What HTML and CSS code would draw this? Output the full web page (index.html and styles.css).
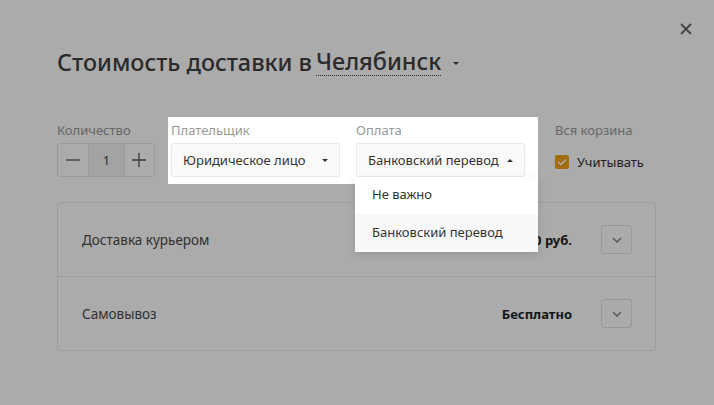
FILE: index.html
```html
<!DOCTYPE html>
<html lang="ru">
<head>
<meta charset="utf-8">
<title>Стоимость доставки</title>
<link rel="stylesheet" href="styles.css">
</head>
<body>
<div class="modal">
  <button class="close" aria-label="Закрыть">
    <svg width="12" height="12" viewBox="0 0 12 12"><path d="M1 1L11 11M11 1L1 11" stroke="#666" stroke-width="1.8" fill="none"/></svg>
  </button>
  <h1 class="title">Стоимость доставки в <span class="city">Челябинск</span><span class="city-caret"></span></h1>

  <div class="controls">
    <div class="field field-qty">
      <div class="label">Количество</div>
      <div class="qty">
        <span class="qty-btn"><svg width="14" height="14" viewBox="0 0 14 14"><path d="M0 7H14" stroke="#555" stroke-width="1.3"/></svg></span>
        <span class="qty-val">1</span>
        <span class="qty-btn qty-plus"><svg width="14" height="14" viewBox="0 0 14 14"><path d="M0 7H14M7 0V14" stroke="#555" stroke-width="1.3"/></svg></span>
      </div>
    </div>

    <div class="spot">
      <div class="field">
        <div class="label">Плательщик</div>
        <div class="select"><span>Юридическое лицо</span><span class="caret down"></span></div>
      </div>
      <div class="field">
        <div class="label">Оплата</div>
        <div class="select open"><span>Банковский перевод</span><span class="caret up"></span>
          <ul class="dropdown">
            <li class="dd-item">Не важно</li>
            <li class="dd-item active">Банковский перевод</li>
          </ul>
        </div>
      </div>
    </div>

    <div class="field field-all">
      <div class="label">Вся корзина</div>
      <label class="check"><span class="box"><svg width="10" height="8" viewBox="0 0 10 8"><path d="M1 4L4 6.5L9 1.5" stroke="#fff" stroke-width="1.6" fill="none"/></svg></span>Учитывать</label>
    </div>
  </div>

  <div class="table">
    <div class="row">
      <span class="row-name">Доставка курьером</span>
      <span class="row-price">300 руб.</span>
      <span class="row-btn"><svg width="10" height="6" viewBox="0 0 10 6"><path d="M1 1L5 5L9 1" stroke="#888" stroke-width="1.6" fill="none"/></svg></span>
    </div>
    <div class="row">
      <span class="row-name">Самовывоз</span>
      <span class="row-price">Бесплатно</span>
      <span class="row-btn"><svg width="10" height="6" viewBox="0 0 10 6"><path d="M1 1L5 5L9 1" stroke="#888" stroke-width="1.6" fill="none"/></svg></span>
    </div>
  </div>
</div>
</body>
</html>
```
FILE: styles.css
```css
html, body {
  margin: 0;
  padding: 0;
  background: #fff;
}
body {
  font-family: "Noto Sans", "DejaVu Sans", sans-serif;
  color: #404040;
  width: 714px;
  height: 405px;
  overflow: hidden;
}
.modal {
  position: relative;
  padding: 40px 58px 0 57px;
}
.close {
  position: absolute;
  top: 22px;
  right: 21px;
  width: 14px;
  height: 14px;
  padding: 0;
  border: 0;
  background: none;
  display: flex;
  align-items: center;
  justify-content: center;
}
.title {
  margin: 0;
  font-size: 23.4px;
  font-weight: 500;
  line-height: 44px;
  color: #404040;
  display: flex;
  align-items: center;
}
.city {
  margin-left: 4px;
  border-bottom: 1px dotted #404040;
  line-height: 27px;
}
.city-caret {
  margin-left: 12px;
  margin-top: 2px;
  border-left: 3px solid transparent;
  border-right: 3px solid transparent;
  border-top: 3px solid #404040;
}
.controls {
  display: flex;
  align-items: flex-start;
  margin-top: 33px;
}
.field {
  padding-top: 4px;
  display: flex;
  flex-direction: column;
}
.label {
  font-size: 13px;
  line-height: 18px;
  color: #999;
  margin-bottom: 4px;
}
.qty {
  display: flex;
  height: 34px;
  box-sizing: border-box;
  border: 1px solid #e6e6e6;
  border-radius: 3px;
  width: 98px;
}
.qty-btn {
  width: 31px;
  display: flex;
  align-items: center;
  justify-content: center;
}
.qty-plus {
  width: 30px;
}
.qty-val {
  width: 35px;
  background: #f4f4f4;
  border-left: 1px solid #e6e6e6;
  border-right: 1px solid #e6e6e6;
  display: flex;
  align-items: center;
  justify-content: center;
  font-size: 12px;
  color: #333;
}
.spot {
  position: relative;
  z-index: 5;
  margin-left: 13px;
  padding: 0 13px 7px 3px;
  background: #fff;
  display: flex;
  gap: 16px;
  box-shadow: 0 0 0 2000px rgba(0, 0, 0, 0.33);
}
.select {
  position: relative;
  width: 169px;
  height: 34px;
  box-sizing: border-box;
  border: 1px solid #e8e8e8;
  border-radius: 3px;
  background: #fafafa;
  display: flex;
  align-items: center;
  justify-content: space-between;
  padding: 0 11px 0 11px;
  font-size: 13px;
  color: #333;
}
.caret {
  border-left: 3px solid transparent;
  border-right: 3px solid transparent;
}
.caret.down {
  border-top: 3px solid #333;
}
.caret.up {
  border-bottom: 3px solid #333;
}
.dropdown {
  position: absolute;
  top: 33px;
  left: -2px;
  width: 183px;
  margin: 0;
  padding: 0;
  list-style: none;
  background: #fff;
  box-shadow: 0 3px 8px rgba(0, 0, 0, 0.12);
}
.dd-item {
  height: 37px;
  box-sizing: border-box;
  display: flex;
  align-items: center;
  padding: 0 0 3px 17px;
  font-size: 13px;
  color: #333;
}
.dd-item.active {
  background: #f8f8f8;
  height: 38px;
  padding-bottom: 2px;
}
.field-all {
  margin-left: 17px;
}
.check {
  height: 34px;
  display: flex;
  align-items: center;
  gap: 8px;
  font-size: 13px;
  color: #333;
  padding-top: 4px;
  box-sizing: border-box;
}
.box {
  width: 14px;
  height: 14px;
  border-radius: 2px;
  background: #f2a30f;
  display: flex;
  align-items: center;
  justify-content: center;
}
.table {
  margin-top: 18px;
  border: 1px solid #ebebeb;
  border-radius: 3px;
}
.row {
  height: 73px;
  display: flex;
  align-items: center;
  padding: 0 23px 0 24px;
}
.row + .row {
  border-top: 1px solid #ebebeb;
}
.row-name {
  flex: 1;
  font-size: 13.5px;
  color: #4a4a4a;
}
.row-price {
  font-size: 13px;
  font-weight: 700;
  color: #222;
}
.row-btn {
  margin-left: 29px;
  width: 31px;
  height: 29px;
  box-sizing: border-box;
  border: 1px solid #e3e3e3;
  border-radius: 3px;
  display: flex;
  align-items: center;
  justify-content: center;
}
```
